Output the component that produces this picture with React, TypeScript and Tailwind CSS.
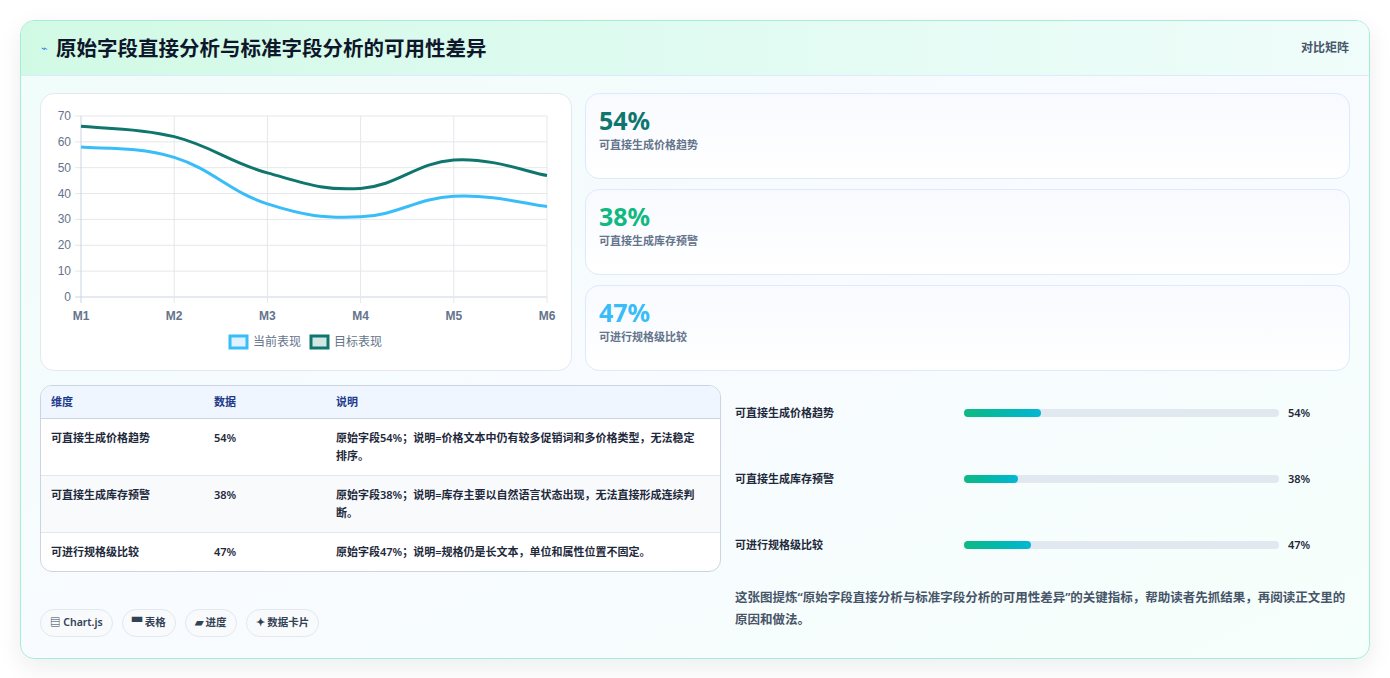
import React from "react";

const XS = [40, 133.2, 226.4, 319.6, 412.8, 506];
const yOf = (v: number) => 203 - v * 2.586;
const current = [58, 54, 36, 31, 39, 35];
const target = [66, 62, 48, 42, 53, 47];

function smooth(vals: number[]) {
  const p = vals.map((v, i) => [XS[i], yOf(v)]);
  let d = `M${p[0][0]},${p[0][1]}`;
  const t = 0.2;
  for (let i = 0; i < p.length - 1; i++) {
    const p0 = p[i - 1] || p[i];
    const p1 = p[i];
    const p2 = p[i + 1];
    const p3 = p[i + 2] || p2;
    const c1 = [p1[0] + (p2[0] - p0[0]) * t, p1[1] + (p2[1] - p0[1]) * t];
    const c2 = [p2[0] - (p3[0] - p1[0]) * t, p2[1] - (p3[1] - p1[1]) * t];
    d += ` C${c1[0]},${c1[1]} ${c2[0]},${c2[1]} ${p2[0]},${p2[1]}`;
  }
  return d;
}

function Chart() {
  const ticks = [0, 10, 20, 30, 40, 50, 60, 70];
  return (
    <svg width="531" height="277" viewBox="0 0 531 277" style={{ fontFamily: "'Liberation Sans', sans-serif" }}>
      {ticks.map((t) => (
        <g key={t}>
          <line x1={34} x2={506} y1={yOf(t)} y2={yOf(t)} stroke={t === 0 ? "#cbd5e1" : "#e5e7eb"} strokeWidth={1} />
          <text x={30} y={yOf(t) + 4} textAnchor="end" fontSize="12" fill="#64748b">{t}</text>
        </g>
      ))}
      {XS.map((x, i) => (
        <g key={i}>
          <line x1={x} x2={x} y1={22} y2={209} stroke={i === 0 ? "#cbd5e1" : "#e5e7eb"} />
          <text x={x} y={226} textAnchor="middle" fontSize="12" fontWeight="bold" fill="#64748b">M{i + 1}</text>
        </g>
      ))}
      <path d={smooth(current)} fill="none" stroke="#38bdf8" strokeWidth={3} />
      <path d={smooth(target)} fill="none" stroke="#0f766e" strokeWidth={3} />
      <rect x={189} y={242} width={17} height={12} fill="#e0f2fe" stroke="#38bdf8" strokeWidth={3} />
      <text x={212} y={252} fontSize="12" fill="#64748b" style={{ fontFamily: "'Noto Sans CJK SC', sans-serif" }}>当前表现</text>
      <rect x={270} y={242} width={17} height={12} fill="#d1e7e3" stroke="#0f766e" strokeWidth={3} />
      <text x={293} y={252} fontSize="12" fill="#64748b" style={{ fontFamily: "'Noto Sans CJK SC', sans-serif" }}>目标表现</text>
    </svg>
  );
}

const stats = [
  { v: "54%", c: "text-[#0f766e]", l: "可直接生成价格趋势" },
  { v: "38%", c: "text-[#10b981]", l: "可直接生成库存预警" },
  { v: "47%", c: "text-[#38bdf8]", l: "可进行规格级比较" },
];

const rows = [
  { d: "可直接生成价格趋势", n: "54%", s: "原始字段54%；说明=价格文本中仍有较多促销词和多价格类型，无法稳定排序。" },
  { d: "可直接生成库存预警", n: "38%", s: "原始字段38%；说明=库存主要以自然语言状态出现，无法直接形成连续判断。" },
  { d: "可进行规格级比较", n: "47%", s: "原始字段47%；说明=规格仍是长文本，单位和属性位置不固定。" },
];

export default function App() {
  return (
    <div className="min-h-[678px] bg-white p-[20px] text-[#0f172a]" style={{ fontFamily: "'Noto Sans', 'Noto Sans CJK SC', sans-serif" }}>
      <div className="overflow-hidden rounded-[14px] border border-[#a7ecd9] bg-gradient-to-br from-[#f0fdf9] via-[#f8fbff] to-[#f5fffb] shadow-[0_8px_24px_rgba(15,23,42,0.08)]">
        <div className="flex h-[55px] items-center justify-between border-b border-[#dbeafe] bg-gradient-to-r from-[#d1fae5] via-[#e0fbf2] to-[#f0fdfa] px-5">
          <div className="flex items-center gap-2">
            <span className="text-[11px] text-[#3b82f6]">⌁</span>
            <h1 className="text-[20.5px] font-bold text-[#0f172a]">原始字段直接分析与标准字段分析的可用性差异</h1>
          </div>
          <span className="text-[12px] font-semibold text-[#475569]">对比矩阵</span>
        </div>
        <div className="px-[19px] pt-[17px] pb-[21px]">
          <div className="flex gap-[13px]">
            <div className="h-[278px] w-[532px] shrink-0 rounded-[14px] border border-[#e2e8f0] bg-white">
              <Chart />
            </div>
            <div className="flex flex-1 flex-col gap-[10px]">
              {stats.map((s) => (
                <div key={s.v} className="h-[86px] rounded-[14px] border border-[#dbeafe] bg-gradient-to-b from-[#f8faff] to-white px-[13px] pt-[10px]">
                  <div className={`text-[25px] font-bold leading-[32px] ${s.c}`}>{s.v}</div>
                  <div className="mt-[1px] text-[11px] font-semibold text-[#64748b]">{s.l}</div>
                </div>
              ))}
            </div>
          </div>
          <div className="mt-[14px] flex gap-[14px]">
            <div className="w-[681px] shrink-0">
              <div className="overflow-hidden rounded-[12px] border border-[#cbd5e1] bg-white text-[11px] font-semibold">
                <div className="flex h-[33px] items-center border-b border-[#cbd5e1] bg-[#eff6ff] px-[10px] text-[#1e3a8a]">
                  <div className="w-[163px]">维度</div>
                  <div className="w-[122px]">数据</div>
                  <div>说明</div>
                </div>
                {rows.map((r, i) => (
                  <div key={r.n} className={`flex px-[10px] py-[10px] leading-[18px] text-[#1e293b] ${i < 2 ? "border-b border-[#e2e8f0]" : ""} ${i === 1 ? "bg-[#f8fafc]" : ""} ${i === 2 ? "py-[9px]" : ""}`}>
                    <div className="w-[163px] shrink-0">{r.d}</div>
                    <div className="w-[122px] shrink-0">{r.n}</div>
                    <div className="flex-1 pr-[14px]">{r.s}</div>
                  </div>
                ))}
              </div>
              <div className="mt-[37px] flex gap-[9px] text-[10.5px] font-semibold text-[#334155]">
                {["▤ Chart.js", "▀ 表格", "▰ 进度", "✦ 数据卡片"].map((c) => (
                  <span key={c} className="flex h-[28px] items-center rounded-full border border-[#e2e8f0] bg-[#f8fafc] px-[9px]">{c}</span>
                ))}
              </div>
            </div>
            <div className="flex-1">
              <div className="flex flex-col">
                {rows.map((r, i) => (
                  <div key={r.n} className={`flex h-[20px] items-center text-[11px] font-semibold text-[#1e293b] ${i === 0 ? "mt-[18px]" : "mt-[46px]"}`}>
                    <div className="w-[229px] shrink-0">{r.d}</div>
                    <div className="h-[8px] w-[315px] rounded-full bg-[#e2e8f0]">
                      <div className="h-full rounded-full bg-gradient-to-r from-[#10b981] to-[#06b6d4]" style={{ width: `${parseInt(r.n) * 0.45}%` }} />
                    </div>
                    <div className="ml-[9px]">{r.n}</div>
                  </div>
                ))}
              </div>
              <p className="mt-[32px] pr-[2px] text-[12.5px] font-semibold leading-[22px] text-[#475569]">
                这张图提炼“原始字段直接分析与标准字段分析的可用性差异”的关键指标，帮助读者先抓结果，再阅读正文里的原因和做法。
              </p>
            </div>
          </div>
        </div>
      </div>
    </div>
  );
}
